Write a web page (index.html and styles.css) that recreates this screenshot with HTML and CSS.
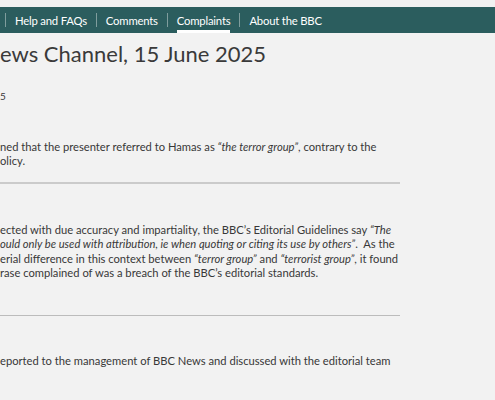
FILE: index.html
```html
<!DOCTYPE html>
<html lang="en">
<head>
<meta charset="utf-8">
<title>Complaints</title>
<link rel="stylesheet" href="styles.css">
</head>
<body>
<div class="strip"></div>
<nav class="nav">
  <span class="sep"></span>
  <a class="item">Help and FAQs</a>
  <span class="sep"></span>
  <a class="item">Comments</a>
  <span class="sep"></span>
  <a class="item active">Complaints</a>
  <span class="sep"></span>
  <a class="item">About the BBC</a>
</nav>
<main class="content">
  <h1 class="title">ews Channel, 15 June 2025</h1>
  <div class="date">5</div>
  <p class="para p1">ned that the presenter referred to Hamas as <i>“the terror group”</i>, contrary to the<br>olicy.</p>
  <hr class="rule thick">
  <p class="para p2">ected with due accuracy and impartiality, the BBC’s Editorial Guidelines say <i>“The</i><br><i>ould only be used with attribution, ie when quoting or citing its use by others”</i>.&nbsp; As the<br>erial difference in this context between <i>“terror group”</i> and <i>“terrorist group”</i>, it found<br>rase complained of was a breach of the BBC’s editorial standards.</p>
  <hr class="rule thin">
  <p class="para p3">eported to the management of BBC News and discussed with the editorial team</p>
</main>
</body>
</html>
```

FILE: styles.css
```css
* { box-sizing: border-box; }
html, body { margin: 0; padding: 0; }
body {
  background: #f2f2f2;
  color: #383838;
  font-family: "Lato", "Liberation Sans", sans-serif;
  width: 495px;
  overflow: hidden;
}
.strip {
  height: 8px;
  background: #f1f1f1;
  border-bottom: 1px solid #dcdcdc;
}
.nav {
  display: flex;
  align-items: center;
  height: 26px;
  margin-top: -1px;
  background: #2b5d5e;
  padding-left: 5px;
}
.sep {
  width: 1px;
  height: 14px;
  background: #7f9d9d;
}
.item {
  display: flex;
  align-items: center;
  height: 100%;
  margin: 0 9px;
  color: #ffffff;
  font-size: 11.3px;
  letter-spacing: -0.2px;
}
.item.active {
  box-shadow: inset 0 -3px 0 #ffffff;
}
.content {
  width: 400px;
}
.title {
  margin: 7px 0 0;
  font-size: 22px;
  line-height: 28px;
  font-weight: 400;
  color: #3a3a3a;
}
.date {
  margin-top: 21px;
  font-size: 10px;
  line-height: 14px;
}
.para {
  margin: 0;
  font-size: 11.2px;
  line-height: 14.4px;
  white-space: nowrap;
}
.p1 { margin-top: 37px; }
.rule {
  border: 0;
  margin: 0;
}
.thick {
  margin-top: 13px;
  height: 2px;
  background: #cbcbcb;
}
.p2 { margin-top: 39px; }
.thin {
  margin-top: 35px;
  height: 1px;
  background: #bcbcbc;
}
.p3 { margin-top: 38px; }
```
